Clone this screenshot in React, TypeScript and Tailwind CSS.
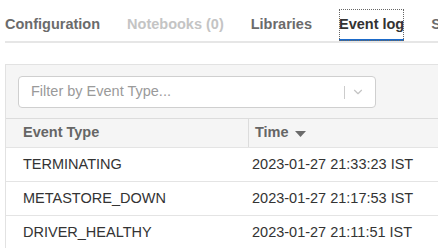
import { ChevronDown } from "lucide-react";

const tabs = [
	{ label: "Configuration", state: "idle" },
	{ label: "Notebooks (0)", state: "disabled" },
	{ label: "Libraries", state: "idle" },
	{ label: "Event log", state: "active" },
	{ label: "Spark UI", state: "idle" },
];

const events = [
	{ type: "TERMINATING", time: "2023-01-27 21:33:23 IST" },
	{ type: "METASTORE_DOWN", time: "2023-01-27 21:17:53 IST" },
	{ type: "DRIVER_HEALTHY", time: "2023-01-27 21:11:51 IST" },
];

export default function App() {
	return (
		<div className="w-[438px] h-[248px] overflow-hidden bg-white pl-[5px] font-['Liberation_Sans',Arial,sans-serif] text-[14.5px]">
			<div className="flex gap-[27px] pt-[9px] border-b-2 border-[#e6e6e6] w-[460px] whitespace-nowrap">
				{tabs.map((tab) => (
					<div
						key={tab.label}
						className={`h-[32px] flex items-center font-bold ${
							tab.state === "active"
								? "text-[#333] outline-1 outline-dotted outline-[#666] -outline-offset-1 shadow-[inset_0_-2px_0_#1b6ac9]"
								: tab.state === "disabled"
									? "text-[#c4c4c4]"
									: "text-[#6b6b6b]"
						}`}
					>
						{tab.label}
					</div>
				))}
			</div>

			<div className="mt-[21px] w-[460px] border border-[#e2e2e2] bg-[#f5f5f5]">
				<div className="pl-[12px] pt-[11px] pb-[10px]">
					<div className="w-[358px] h-[32px] bg-white border border-[#cfcfcf] rounded-[4px] flex items-center pl-[12px] pr-[10px]">
						<span className="flex-1 text-[#9a9a9a]">Filter by Event Type...</span>
						<span className="w-px h-[13px] bg-[#cccccc]" />
						<ChevronDown className="ml-[6px] w-[14px] h-[14px] text-[#c4c4c4]" strokeWidth={2} />
					</div>
				</div>

				<div className="grid grid-cols-[242px_1fr] h-[29px] border-t border-[#dcdcdc] font-bold text-[#666]">
					<div className="pl-[17px] flex items-center">Event Type</div>
					<div className="border-l border-[#dcdcdc] pl-[6px] flex items-center gap-[6px]">
						Time
						<svg width="11" height="6" viewBox="0 0 11 6" className="mt-[1px]">
							<path d="M0 0h11L5.5 6z" fill="#6b6b6b" />
						</svg>
					</div>
				</div>

				{events.map((ev) => (
					<div
						key={ev.type}
						className="grid grid-cols-[242px_1fr] h-[34px] border-t border-[#e4e4e4] bg-white text-[#333]"
					>
						<div className="pl-[17px] flex items-center">{ev.type}</div>
						<div className="pl-[4px] flex items-center">{ev.time}</div>
					</div>
				))}
			</div>
		</div>
	);
}
